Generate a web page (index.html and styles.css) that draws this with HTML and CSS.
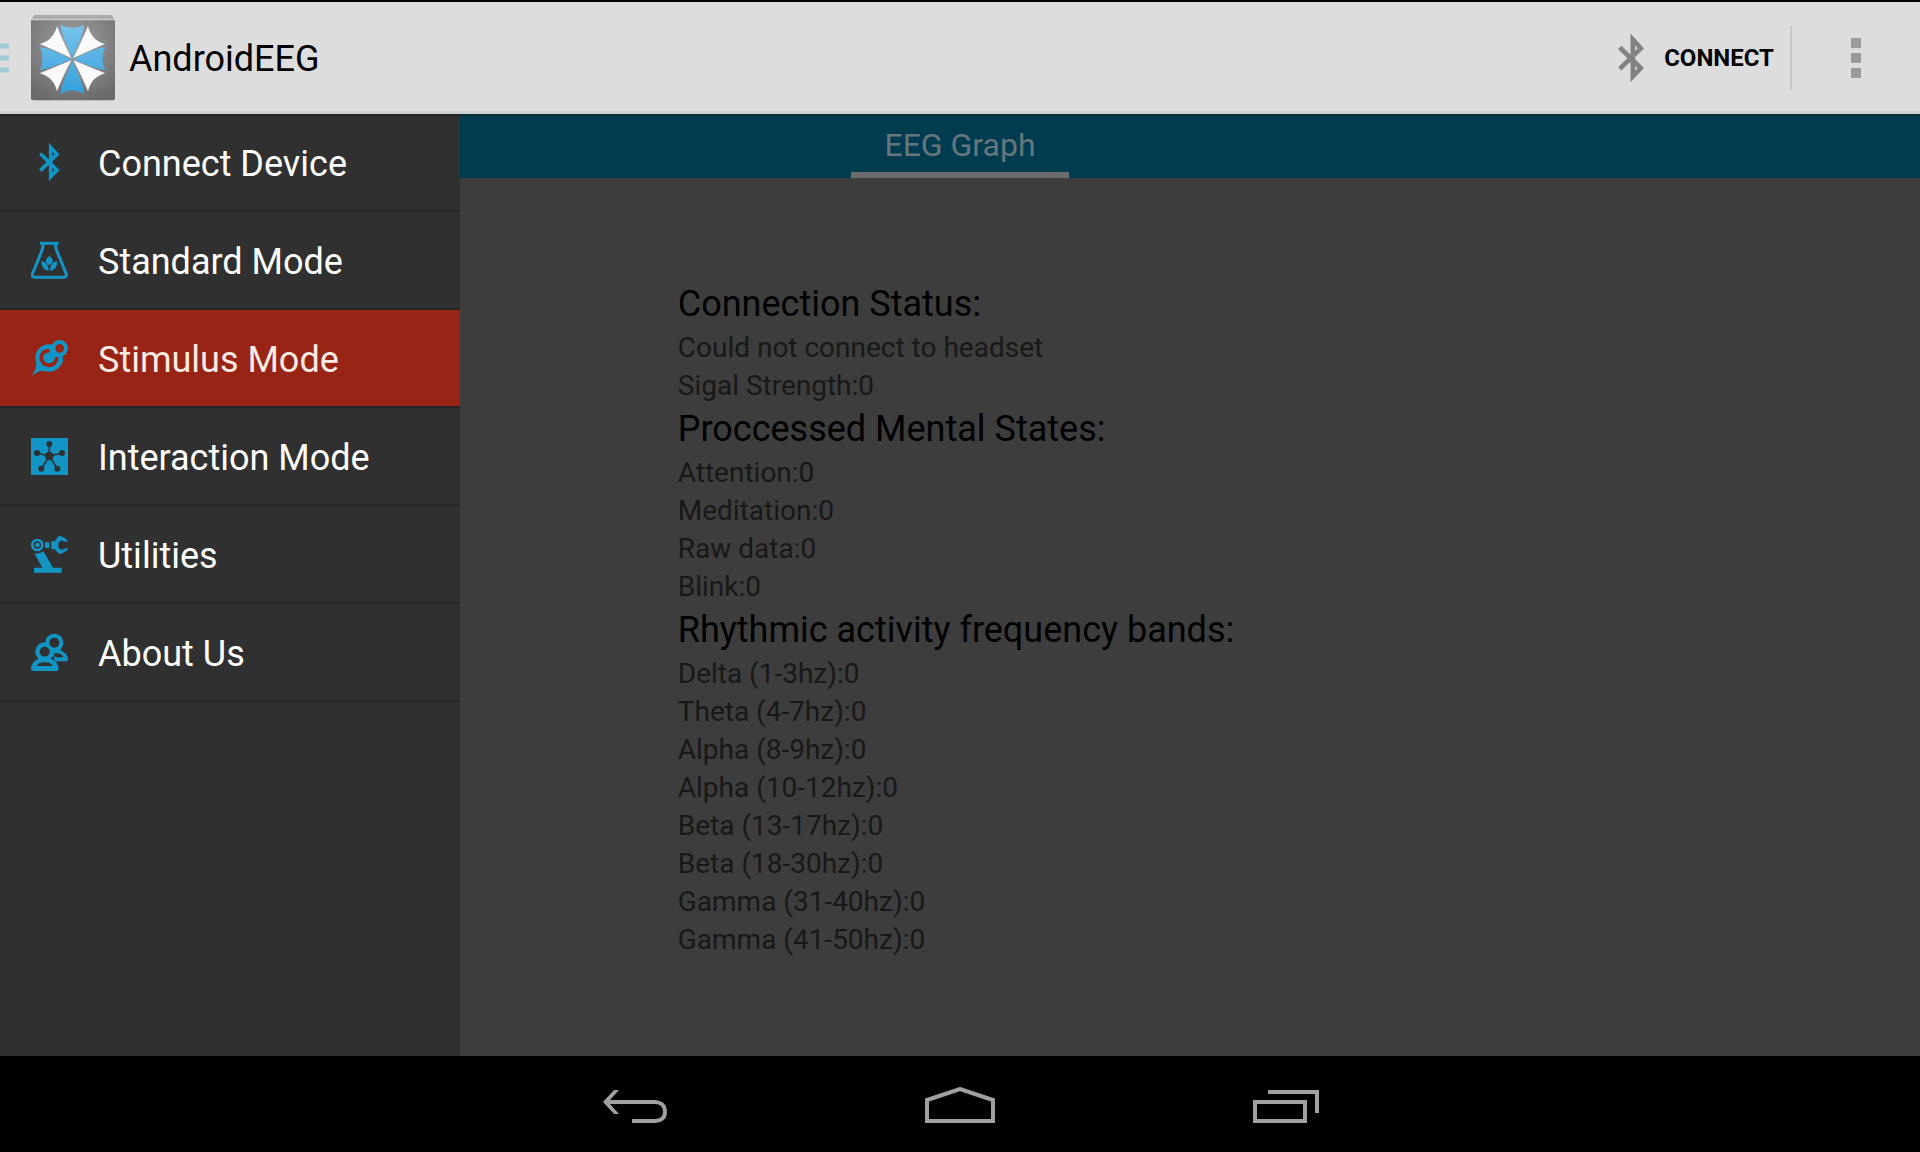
FILE: index.html
```
<!DOCTYPE html>
<html lang="en">

<head>
    <meta charset="utf-8">
    <title>AndroidEEG</title>
    <link rel="stylesheet" href="styles.css">
</head>

<body>
    <svg class="sprite" aria-hidden="true">
        <symbol id="bluetooth" viewBox="0 0 114 114">
            <path d="M28 32L78 81L59 101V13L78 34L28 83" fill="none" stroke="currentColor" stroke-width="11" />
        </symbol>
    </svg>

    <header class="actionbar">
        <button class="home" aria-label="Toggle menu">
            <svg class="drawer-mark" viewBox="0 0 9 30" aria-hidden="true">
                <path d="M0 3H9M0 15H9M0 27H9" stroke="#a0ccd9" stroke-width="5" />
            </svg>
            <svg class="logo" viewBox="0 0 252 258" aria-hidden="true">
                <defs>
                    <radialGradient id="tile" cx="50%" cy="30%" r="75%">
                        <stop offset="0" stop-color="#a2a2a2" />
                        <stop offset="1" stop-color="#6a6a6a" />
                    </radialGradient>
                    <linearGradient id="petal" x1="0" y1="30" x2="0" y2="240" gradientUnits="userSpaceOnUse">
                        <stop offset="0" stop-color="#78c3ec" />
                        <stop offset="1" stop-color="#339fdb" />
                    </linearGradient>
                </defs>
                <path d="M10 0H242L252 16H0Z" fill="#a9abac" />
                <path d="M0 11H252V18H0Z" fill="#cbcdce" />
                <path d="M0 16H252V250Q252 256 246 256H6Q0 256 0 250Z" fill="url(#tile)" />
                <g fill="url(#petal)">
                    <path d="M88 29Q124 47 160 29Q156 60 124 128Q92 60 88 29Z" />
                    <path d="M88 237Q124 215 160 237Q156 206 124 138Q92 206 88 237Z" />
                    <path d="M26 96Q43 133 26 165Q60 161 120 133Q60 100 26 96Z" />
                    <path d="M223 96Q206 133 223 165Q188 161 128 133Q188 100 223 96Z" />
                </g>
                <g fill="#fafafa">
                    <path d="M78 33Q68 76 26 87Q56 99 121 129Q92 70 78 33Z" />
                    <path d="M171 33Q181 76 222 87Q193 99 127 129Q156 70 171 33Z" />
                    <path d="M78 229Q68 186 26 175Q56 163 121 136Q92 192 78 229Z" />
                    <path d="M171 229Q181 186 223 175Q193 163 127 136Q156 192 171 229Z" />
                </g>
            </svg>
            <span class="app-name">AndroidEEG</span>
        </button>
        <button class="connect">
            <svg class="connect-icon" aria-hidden="true"><use href="#bluetooth" /></svg>
            CONNECT
        </button>
        <button class="overflow" aria-label="More options">
            <svg viewBox="0 0 10 40" aria-hidden="true">
                <path d="M0 0H10V10H0ZM0 15H10V25H0ZM0 30H10V40H0Z" fill="#9a9a9a" />
            </svg>
        </button>
    </header>

    <div class="stage">
        <main class="content">
            <div class="tabs">
                <button class="tab">EEG Graph</button>
            </div>
            <div class="readings">
                <div>
                    <h2>Connection Status:</h2>
                    <p>Could not connect to headset</p>
                    <p>Sigal Strength:0</p>
                    <h2>Proccessed Mental States:</h2>
                    <p>Attention:0</p>
                    <p>Meditation:0</p>
                    <p>Raw data:0</p>
                    <p>Blink:0</p>
                    <h2>Rhythmic activity frequency bands:</h2>
                    <p>Delta (1-3hz):0</p>
                    <p>Theta (4-7hz):0</p>
                    <p>Alpha (8-9hz):0</p>
                    <p>Alpha (10-12hz):0</p>
                    <p>Beta (13-17hz):0</p>
                    <p>Beta (18-30hz):0</p>
                    <p>Gamma (31-40hz):0</p>
                    <p>Gamma (41-50hz):0</p>
                </div>
            </div>
        </main>

        <nav class="drawer">
            <a class="item" href="#connect">
                <svg class="icon" aria-hidden="true"><use href="#bluetooth" /></svg>
                <span>Connect Device</span>
            </a>
            <a class="item" href="#standard">
                <svg class="icon" viewBox="0 0 114 114" aria-hidden="true">
                    <g fill="none" stroke="currentColor" stroke-width="9">
                        <path d="M27 7H83" />
                        <path d="M37 8Q36 22 30 36L5 97Q1 109 12 109H98Q109 109 105 97L80 36Q74 22 73 8" />
                    </g>
                    <path d="M55 44Q69 56 64 66Q57 69 55 74Q53 69 46 66Q41 56 55 44ZM31 60Q53 63 53 89Q31 88 31 60ZM79 60Q57 63 57 89Q79 88 79 60Z" fill="currentColor" />
                </svg>
                <span>Standard Mode</span>
            </a>
            <a class="item active" href="#stimulus">
                <svg class="icon" viewBox="0 0 114 114" aria-hidden="true">
                    <g fill="currentColor">
                        <circle cx="54" cy="57" r="41" />
                        <circle cx="86" cy="28" r="25" />
                        <path d="M92 48Q101 62 90 79L70 60ZM62 18L74 6L80 30ZM16 70Q18 88 2 111Q22 94 40 95Z" />
                    </g>
                    <g class="cut" fill="none">
                        <path d="M51 35Q30 38 31 58Q34 78 54 79Q74 77 77 59" stroke-width="11" stroke-linecap="round" />
                        <circle cx="86" cy="28" r="7" stroke-width="12" />
                    </g>
                </svg>
                <span>Stimulus Mode</span>
            </a>
            <a class="item" href="#interaction">
                <svg class="icon" viewBox="0 0 114 114" aria-hidden="true">
                    <path d="M0 3H111V114H0Z" fill="currentColor" />
                    <path class="cut" d="M55 57V20M55 57L18 48M55 57L93 48M55 57L31 96M55 57L79 96" stroke-width="5" />
                    <g class="node">
                        <circle cx="55" cy="57" r="13" />
                        <circle cx="55" cy="21" r="9" />
                        <circle cx="18" cy="48" r="9" />
                        <circle cx="93" cy="48" r="9" />
                        <circle cx="31" cy="95" r="9" />
                        <circle cx="79" cy="95" r="9" />
                    </g>
                </svg>
                <span>Interaction Mode</span>
            </a>
            <a class="item" href="#utilities">
                <svg class="icon" viewBox="0 0 114 114" aria-hidden="true">
                    <g fill="currentColor">
                        <circle cx="19" cy="30" r="19" />
                        <path d="M42 22H55V39H42ZM10 55Q24 58 37 49L66 98H92V113H9V98H34Z" />
                        <path d="M61 19H71L82 4L90 3L109 14V22L90 16L82 25V36L90 45L109 38V46L90 57L82 55L71 43H61Z" />
                    </g>
                    <circle class="cut" cx="19" cy="30" r="9" fill="none" stroke-width="4" />
                </svg>
                <span>Utilities</span>
            </a>
            <a class="item" href="#about">
                <svg class="icon" viewBox="0 0 114 114" aria-hidden="true">
                    <g fill="currentColor">
                        <circle cx="70" cy="29" r="27" />
                        <circle cx="41" cy="56" r="28" />
                        <path d="M62 52L88 46Q88 53 95 56Q112 64 111 80Q111 85 105 85H72Z" />
                        <path d="M24 76H58Q82 86 83 108Q83 114 77 114H6Q0 114 0 108Q2 86 24 76Z" />
                    </g>
                    <g class="node">
                        <circle cx="70" cy="29" r="15" />
                        <circle cx="41" cy="56" r="15" />
                        <path d="M18 99Q20 89 41 88Q62 89 65 99ZM70 60Q94 60 97 73H75Q67 68 70 60Z" />
                    </g>
                </svg>
                <span>About Us</span>
            </a>
        </nav>
    </div>

    <footer class="navbar">
        <button aria-label="Back">
            <svg viewBox="0 0 72 38" aria-hidden="true">
                <path d="M20 3H15L4 15L15 27H20L11 17H56Q64 17 64 25Q64 32 56 32H33V36H56Q68 35 68 25Q68 14 56 13H11Z" />
            </svg>
        </button>
        <button aria-label="Home">
            <svg viewBox="0 0 72 38" aria-hidden="true">
                <path d="M3 34V13L36 2L69 13V34Z" class="line" />
            </svg>
        </button>
        <button aria-label="Recent apps">
            <svg viewBox="0 0 72 38" aria-hidden="true">
                <path d="M6 15H56V34H6ZM19 5H68V26" class="line" />
            </svg>
        </button>
    </footer>
</body>

</html>
```

FILE: styles.css
```
body {
    margin: 0;
    min-height: 100vh;
    display: grid;
    grid-template-rows: auto 1fr auto;
    font-family: Roboto, sans-serif;
    background-color: black;
}

button {
    background: none;
    border: none;
    padding: 0;
    margin: 0;
    font-family: inherit;
    color: black;
}

svg {
    display: block;
    flex: none;
}

.sprite {
    position: absolute;
    width: 0;
    height: 0;
}

/* top bar */
.actionbar {
    display: flex;
    align-items: center;
    height: 112px;
    border-top: 2px solid black;
    background-color: #dddddd;
    box-shadow: inset 0 -3px 0 #cdcfd0;
}

.home {
    display: flex;
    align-items: center;
    margin-right: auto;
}

.drawer-mark {
    width: 9px;
    height: 30px;
    margin-right: 22px;
}

.logo {
    width: 84px;
    height: 86px;
}

.app-name {
    margin-left: 14px;
    padding-top: 2px;
    font-size: 36px;
}

.connect {
    display: flex;
    align-items: center;
    gap: 8px;
    height: 64px;
    padding-right: 16px;
    border-right: 2px solid #c6c6c6;
    font-size: 24px;
    font-weight: 700;
}

.connect-icon {
    width: 48px;
    height: 48px;
    color: #828282;
}

.overflow {
    display: flex;
    justify-content: center;
    width: 128px;
}

.overflow svg {
    width: 10px;
    height: 40px;
}

/* the drawer shares one cell with the content and covers its left side */
.stage {
    display: grid;
    grid-template-columns: 1fr;
}

.content,
.drawer {
    grid-area: 1 / 1;
}

.content {
    display: flex;
    flex-direction: column;
    background-color: #3d3d3d;
}

.tabs {
    display: flex;
    justify-content: center;
    height: 64px;
    background: linear-gradient(#0d2f3b, #003c4f 5px);
}

.tab {
    padding: 4px 33px 0;
    border-bottom: 6px solid #6b6b6b;
    font-size: 32px;
    color: #66767c;
}

.readings {
    flex: 1;
    display: flex;
    justify-content: center;
    align-items: center;
    padding: 4px 8px 0 0;
    color: #181818;
}

.readings h2 {
    margin: 0;
    font-size: 36px;
    font-weight: 400;
    line-height: 49px;
    color: black;
}

.readings p {
    margin: 0;
    font-size: 28px;
    line-height: 38px;
}

.drawer {
    justify-self: start;
    width: 460px;
    background: linear-gradient(#252525, #303030 5px);
}

.item {
    --row: #303030;
    display: flex;
    align-items: center;
    gap: 29px;
    height: 96px;
    padding-left: 31px;
    border-bottom: 2px solid #262626;
    font-size: 36px;
    color: white;
    text-decoration: none;
}

.item span {
    padding-top: 4px;
}

.active {
    --row: #982416;
    background-color: #982416;
    color: #fdeae2;
}

.icon {
    width: 38px;
    height: 38px;
    color: #1295c4;
}

.cut {
    stroke: var(--row);
}

.node {
    fill: var(--row);
}

/* system buttons */
.navbar {
    display: grid;
    grid-template-columns: repeat(3, 325px);
    justify-content: center;
    height: 96px;
}

.navbar button {
    display: flex;
    justify-content: center;
    align-items: center;
    padding-top: 4px;
}

.navbar svg {
    width: 72px;
    height: 38px;
    fill: #a0a0a0;
}

.navbar .line {
    fill: none;
    stroke: #a0a0a0;
    stroke-width: 4;
}
```
